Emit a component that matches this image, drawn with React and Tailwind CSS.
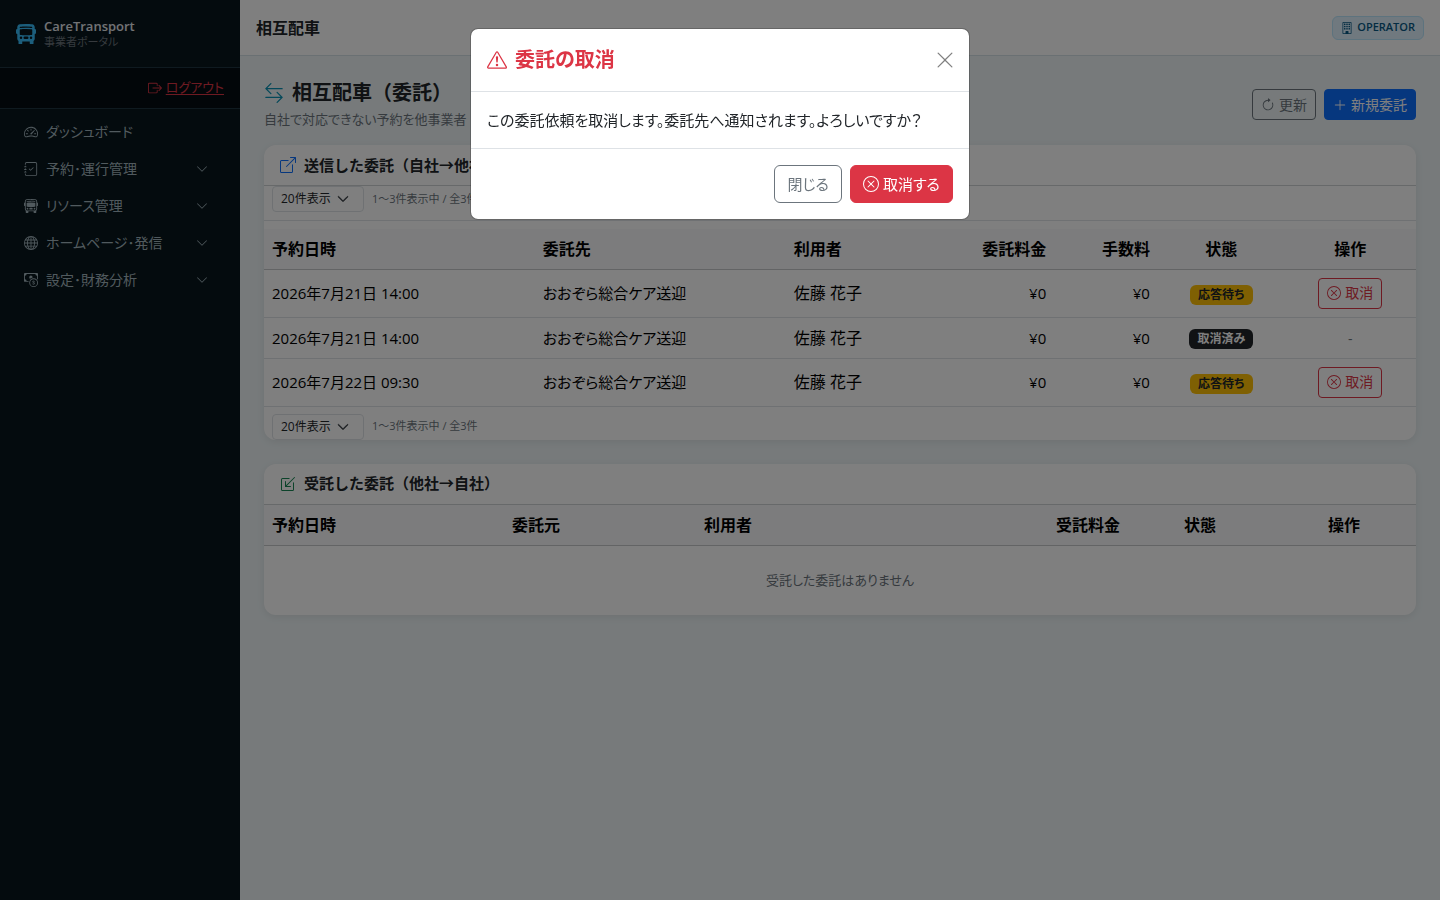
import React, { useState } from 'react';
import {
  BsArrowClockwise,
  BsArrowLeftRight,
  BsBoxArrowInDownLeft,
  BsBoxArrowRight,
  BsBoxArrowUpRight,
  BsBuilding,
  BsBusFront,
  BsBusFrontFill,
  BsCashCoin,
  BsChevronDown,
  BsExclamationTriangle,
  BsGlobe,
  BsJournalCheck,
  BsPlusLg,
  BsSpeedometer2,
  BsXCircle,
  BsXLg,
} from 'react-icons/bs';

const menuItems = [
  { label: 'ダッシュボード', icon: BsSpeedometer2, expandable: false },
  { label: '予約･運行管理', icon: BsJournalCheck, expandable: true },
  { label: 'リソース管理', icon: BsBusFront, expandable: true },
  { label: 'ホームページ･発信', icon: BsGlobe, expandable: true },
  { label: '設定･財務分析', icon: BsCashCoin, expandable: true },
];

const sentItems = [
  { id: 1, date: '2026年7月21日 14:00', partner: 'おおぞら総合ケア送迎', user: '佐藤 花子', fee: 0, commission: 0, status: 'pending' },
  { id: 2, date: '2026年7月21日 14:00', partner: 'おおぞら総合ケア送迎', user: '佐藤 花子', fee: 0, commission: 0, status: 'cancelled' },
  { id: 3, date: '2026年7月22日 09:30', partner: 'おおぞら総合ケア送迎', user: '佐藤 花子', fee: 0, commission: 0, status: 'pending' },
];

const Sidebar = () => (
  <aside className="w-60 shrink-0 bg-[#08161c] text-[#a3b5bd] [font-feature-settings:'palt']">
    <div className="flex h-[67px] items-center gap-2 px-4">
      <BsBusFrontFill className="size-5 text-[#38bdf8]" />
      <div>
        <p className="text-[13px] leading-4 font-semibold text-gray-200">CareTransport</p>
        <p className="text-[11px] leading-4 text-[#6c757d]">事業者ポータル</p>
      </div>
    </div>
    <div className="flex h-[42px] items-center justify-end border-y border-[#1e3440] bg-[#040d12] px-4 text-[13px] text-[#dc3545]">
      <a href="#logout" className="flex items-center gap-1">
        <BsBoxArrowRight className="size-[14px]" />
        <span className="underline underline-offset-2">ログアウト</span>
      </a>
    </div>
    <nav className="flex flex-col px-6 py-1">
      {menuItems.map(({ label, icon: Icon, expandable }) => (
        <a key={label} href="#menu" className="flex h-[37px] items-center gap-2 text-sm">
          <Icon className="size-[14px]" />
          <span>{label}</span>
          {expandable && <BsChevronDown className="mr-2 ml-auto size-3" />}
        </a>
      ))}
    </nav>
  </aside>
);

const Topbar = () => (
  <header className="flex h-14 items-center justify-between border-b border-[#d5e1e6] bg-white px-4">
    <h1 className="font-semibold text-[#212529]">相互配車</h1>
    <span className="flex h-6 items-center gap-1 rounded-md border border-[#bae6fd] bg-[#e0f2fe] px-2 text-[11px] font-semibold text-[#075985]">
      <BsBuilding className="size-3" />
      OPERATOR
    </span>
  </header>
);

const PageHeader = () => (
  <div className="flex items-center justify-between">
    <div>
      <h2 className="flex items-center gap-2 text-xl leading-[26px] font-semibold text-[#212529]">
        <BsArrowLeftRight className="text-[#0891b2]" />
        相互配車（委託）
      </h2>
      <p className="mt-[3px] text-[13px] leading-5 text-[#6c757d] [font-feature-settings:'palt']">
        自社で対応できない予約を他事業者
      </p>
    </div>
    <div className="flex gap-2">
      <button type="button" className="flex h-[31px] items-center gap-1 rounded border border-[#6c757d] px-2 text-sm text-[#6c757d]">
        <BsArrowClockwise />
        更新
      </button>
      <button type="button" className="flex h-[31px] items-center gap-1 rounded border border-[#0d6efd] bg-[#0d6efd] px-2 text-sm text-white">
        <BsPlusLg />
        新規委託
      </button>
    </div>
  </div>
);

const Pager = ({ id }) => (
  <div className="flex items-center gap-2 px-2">
    <div className="relative">
      <select
        id={id}
        className="block h-[26px] w-[92px] appearance-none rounded border border-[#dee2e6] bg-white pl-2 text-xs text-[#212529]"
      >
        <option>20件表示</option>
        <option>50件表示</option>
      </select>
      <BsChevronDown className="pointer-events-none absolute top-[7px] right-[15px] size-3 stroke-1 text-[#343a40]" />
    </div>
    <label htmlFor={id} className="text-[11px] text-[#6c757d]">1～3件表示中 / 全3件</label>
  </div>
);

const StatusBadge = ({ status }) => {
  if (status === 'pending') {
    return (
      <span className="inline-block rounded-md bg-[#ffc107] px-2 py-1 align-middle text-xs leading-3 font-semibold text-[#212529] [font-feature-settings:'palt']">
        応答待ち
      </span>
    );
  }
  return (
    <span className="inline-block rounded-md bg-[#212529] px-2 py-1 align-middle text-xs leading-3 font-semibold text-white [font-feature-settings:'palt']">
      取消済み
    </span>
  );
};

const Card = ({ icon, title, children }) => (
  <section className="overflow-hidden rounded-xl bg-white shadow-[0_2px_8px_rgba(0,0,0,0.08)]">
    <h3 className="flex h-[41px] items-center gap-2 border-b border-[#cfd2d4] px-4 text-[15px] font-semibold text-[#212529]">
      {icon}
      {title}
    </h3>
    {children}
  </section>
);

const SentCard = ({ onCancel }) => (
  <Card icon={<BsBoxArrowUpRight className="size-4 text-[#0d6efd]" />} title="送信した委託（自社→他社）">
    <div className="border-b border-[#dee2e6] pb-2">
      <Pager id="pager-top" />
    </div>
    <table className="mt-2 w-full table-fixed text-black">
      <thead>
        <tr className="h-10 border-b border-[#c6c8ca] bg-[#f8f9fa] text-left">
          <th className="w-[23.5%] px-2 font-semibold">予約日時</th>
          <th className="w-[21.8%] px-2 font-semibold">委託先</th>
          <th className="w-[11.6%] px-2 font-semibold">利用者</th>
          <th className="w-[11.7%] px-2 text-right font-semibold">委託料金</th>
          <th className="w-[9%] px-2 text-right font-semibold">手数料</th>
          <th className="w-[11%] px-2 text-center font-semibold">状態</th>
          <th className="w-[11.4%] px-2 text-center font-semibold">操作</th>
        </tr>
      </thead>
      <tbody>
        {sentItems.map(item => (
          <tr key={item.id} className="border-b border-[#dee2e6]">
            <td className="p-2 text-[15px] leading-6">{item.date}</td>
            <td className="p-2 text-[15px] leading-6 [font-feature-settings:'palt']">{item.partner}</td>
            <td className="p-2">{item.user}</td>
            <td className="p-2 text-right text-[15px] leading-6">¥{item.fee}</td>
            <td className="p-2 text-right text-[15px] leading-6">¥{item.commission}</td>
            <td className="p-2 text-center">
              <StatusBadge status={item.status} />
            </td>
            <td className="p-2 text-center">
              {item.status === 'pending' ? (
                <button
                  type="button"
                  onClick={onCancel}
                  className="inline-flex h-[31px] items-center gap-1 rounded border border-[#dc3545] px-2 align-middle text-sm text-[#dc3545]"
                >
                  <BsXCircle />
                  取消
                </button>
              ) : (
                <span className="text-sm text-[#6c757d]">-</span>
              )}
            </td>
          </tr>
        ))}
      </tbody>
    </table>
    <div className="pt-[7px]">
      <Pager id="pager-bottom" />
    </div>
  </Card>
);

const ReceivedCard = () => (
  <Card icon={<BsBoxArrowInDownLeft className="size-4 text-[#198754]" />} title="受託した委託（他社→自社）">
    <table className="w-full table-fixed text-black">
      <thead>
        <tr className="h-[41px] border-b border-[#c6c8ca] bg-[#f8f9fa] text-left">
          <th className="w-5/24 px-2 font-semibold">予約日時</th>
          <th className="w-4/24 px-2 font-semibold">委託元</th>
          <th className="w-4/24 px-2 font-semibold">利用者</th>
          <th className="w-5/24 px-2 text-right font-semibold">受託料金</th>
          <th className="w-3/24 px-2 text-center font-semibold">状態</th>
          <th className="w-3/24 px-2 text-center font-semibold">操作</th>
        </tr>
      </thead>
      <tbody>
        <tr>
          <td colSpan={6} className="py-6 text-center text-[13px] leading-[21px] text-[#6c757d] [font-feature-settings:'palt']">
            受託した委託はありません
          </td>
        </tr>
      </tbody>
    </table>
  </Card>
);

const CancelModal = ({ onClose }) => (
  <div className="fixed inset-0 z-10 overflow-y-auto bg-black/50 px-4 py-7">
    <div
      role="dialog"
      aria-modal="true"
      aria-labelledby="cancel-title"
      className="mx-auto max-w-[500px] rounded-lg border border-black/20 bg-white bg-clip-padding text-[#212529] [font-feature-settings:'palt']"
    >
      <div className="flex items-center justify-between border-b border-[#dee2e6] p-4">
        <h2 id="cancel-title" className="flex items-center gap-2 text-xl leading-[30px] font-semibold text-[#dc3545]">
          <BsExclamationTriangle />
          委託の取消
        </h2>
        <button type="button" aria-label="閉じる" onClick={onClose} className="-mr-0.5 text-[#808080]">
          <BsXLg className="size-5" />
        </button>
      </div>
      <p className="border-b border-[#dee2e6] p-4 text-[15px] leading-6">
        この委託依頼を取消します。委託先へ通知されます。よろしいですか？
      </p>
      <div className="flex justify-end gap-2 p-4 text-[15px]">
        <button type="button" onClick={onClose} className="h-[38px] rounded-md border border-[#6c757d] px-3 text-[#6c757d]">
          閉じる
        </button>
        <button type="button" onClick={onClose} className="flex h-[38px] items-center gap-1 rounded-md border border-[#dc3545] bg-[#dc3545] px-3 text-white">
          <BsXCircle className="size-4" />
          取消する
        </button>
      </div>
    </div>
  </div>
);

export default function App() {
  const [open, setOpen] = useState(true);

  return (
    <div className="flex min-h-screen bg-[#eef5f7] font-['Open_Sans','Noto_Sans_CJK_JP',sans-serif]">
      <Sidebar />
      <div className="min-w-0 flex-1">
        <Topbar />
        <main className="flex flex-col gap-6 p-6">
          <div className="-mb-2">
            <PageHeader />
          </div>
          <SentCard onCancel={() => setOpen(true)} />
          <ReceivedCard />
        </main>
      </div>
      {open && <CancelModal onClose={() => setOpen(false)} />}
    </div>
  );
}
